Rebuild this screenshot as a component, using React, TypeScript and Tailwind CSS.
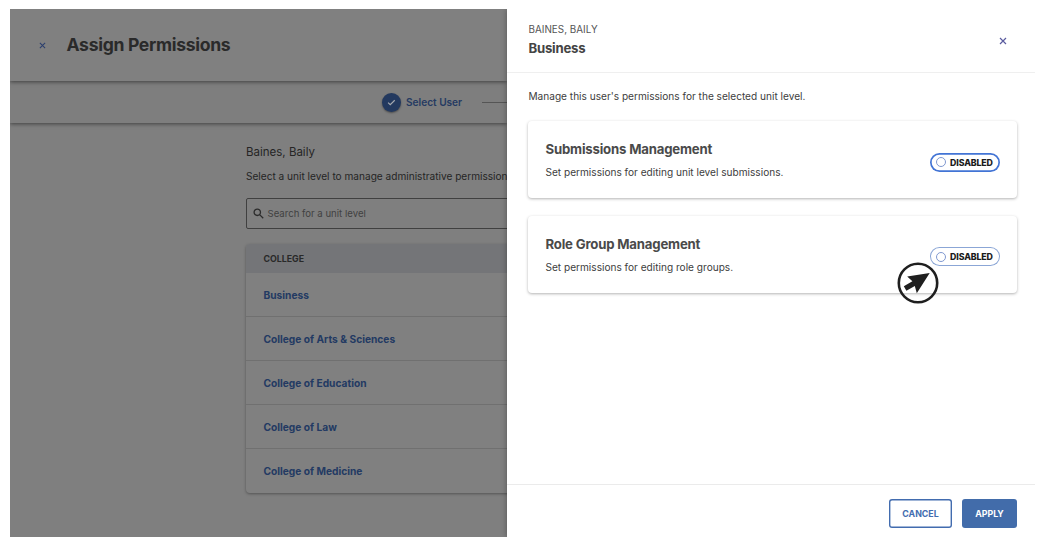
import { useState } from "react";

const colleges = [
    "Business",
    "College of Arts & Sciences",
    "College of Education",
    "College of Law",
    "College of Medicine",
];

const Close = ({ className }: { className: string }) => (
    <svg viewBox="0 0 8 8" className={className} fill="none" stroke="currentColor" strokeWidth="1.2">
        <path d="M1 1l6 6M7 1L1 7" />
    </svg>
);

const PermissionCard = ({ title, text, focused }: { title: string; text: string; focused?: boolean }) => {

    const [enabled, setEnabled] = useState(false);

    return (
        <div className="flex h-[77px] items-center justify-between rounded-[4px] bg-white pl-[17.5px] pr-[17.5px] shadow-[0_1px_3px_rgba(0,0,0,0.3)]">

            <div className="pt-px">
                <h3 className="text-[13.2px] leading-[18px] font-bold tracking-[-0.19px] text-[#4a4a4a]">{title}</h3>
                <p className="mt-[6px] text-[10.11px] leading-[16px] text-[#404040]">{text}</p>
            </div>

            <button
                onClick={() => setEnabled(!enabled)}
                className={
                    "mt-[5px] flex h-[19px] w-[70px] items-center rounded-full bg-white pt-px pl-[6.5px] text-[8.8px] font-extrabold tracking-[-0.12px] text-[#1c1c1c] " +
                    (focused ? "shadow-[inset_0_0_0_1.7px_#4274d5]" : "shadow-[inset_0_0_0_1px_#8ba6d6]")
                }
            >
                <span className="mr-[4px] mb-px size-[10px] shrink-0 rounded-full border border-[#8099d0]" />
                {enabled ? "ENABLED" : "DISABLED"}
            </button>

        </div>
    );
};

const App = () => {
    return (
        <div className="h-[547px] w-[1044px] overflow-hidden bg-white pt-[9px] pl-[10px] font-['Inter',sans-serif]">

            <div className="flex h-[528px] w-[1025px] overflow-hidden">

                <main className="flex w-[497px] shrink-0 flex-col overflow-hidden bg-[#7f7f7f] whitespace-nowrap">

                    <header className="relative z-20 flex h-[72px] shrink-0 items-center bg-[#808080] pl-[29px] shadow-[0_1px_4px_rgba(0,0,0,0.5)]">
                        <Close className="size-[7px] text-[#2b3f6d]" />
                        <h1 className="ml-[20.5px] pt-px text-[17.6px] font-bold tracking-[-0.32px] text-[#2a2a2a]">Assign Permissions</h1>
                    </header>

                    <div className="relative z-10 flex h-[42px] shrink-0 items-center bg-[#7e7e7e] pl-[372px] shadow-[0_1px_4px_rgba(0,0,0,0.5)]">
                        <span className="flex size-[19px] shrink-0 items-center justify-center rounded-full bg-[#23395f] shadow-[0_1px_2px_rgba(0,0,0,0.4)]">
                            <svg viewBox="0 0 10 10" className="size-[9px]" fill="none" stroke="#a5a9b0" strokeWidth="1.3">
                                <path d="M1.2 5.2l2.4 2.3 5-5" />
                            </svg>
                        </span>
                        <span className="ml-[5px] pt-px text-[10.1px] font-semibold text-[#253a62]">Select User</span>
                        <span className="ml-[20px] h-px flex-1 bg-[#555]" />
                    </div>

                    <section className="pt-[20px] pl-[236px]">

                        <h2 className="text-[11.5px] leading-[18px] text-[#252525]">Baines, Baily</h2>
                        <p className="mt-[7px] text-[10.11px] leading-[16px] text-[#252525]">
                            Select a unit level to manage administrative permissions.
                        </p>

                        <div className="mt-[14px] flex h-[31px] w-[500px] items-center rounded-[2px] border border-[#404040] pl-[6px]">
                            <svg viewBox="0 0 10 10" className="size-[11px]" fill="none" stroke="#2c2c2c" strokeWidth="1.2">
                                <circle cx="3.9" cy="3.9" r="2.9" />
                                <path d="M6 6l3.3 3.3" />
                            </svg>
                            <span className="ml-[3.5px] pt-px text-[9.6px] text-[#414141]">Search for a unit level</span>
                        </div>

                        <div className="mt-[15px] w-[500px] overflow-hidden rounded-[4px] bg-[#808080] shadow-[0_1px_3px_rgba(0,0,0,0.35)]">
                            <div className="flex h-[29px] items-center bg-[#747578] pl-[17.5px] text-[8.8px] font-bold text-[#292929]">
                                COLLEGE
                            </div>
                            {colleges.map((name) => (
                                <div
                                    key={name}
                                    className="flex h-[44px] items-center border-b border-[#707070] pt-[2px] pl-[17.5px] text-[10.2px] font-bold text-[#233a63] last:border-b-0 last:pt-px"
                                >
                                    {name}
                                </div>
                            ))}
                        </div>

                    </section>

                </main>

                <aside className="relative z-30 flex flex-1 flex-col bg-white shadow-[0_0_6px_rgba(0,0,0,0.35)]">

                    <header className="flex h-[64px] items-center justify-between border-b border-[#efefef] pr-[28.5px] pl-[21.5px]">
                        <div className="pb-[2px]">
                            <p className="text-[9.9px] leading-[14px] text-[#555]">BAINES, BAILY</p>
                            <h2 className="mt-[3px] text-[13.2px] leading-[18px] font-bold tracking-[-0.24px] text-[#444]">Business</h2>
                        </div>
                        <Close className="size-[8px] text-[#5a5b9f]" />
                    </header>

                    <div className="flex-1 pt-[15px] pr-[18px] pl-[21px]">

                        <p className="pl-[0.5px] text-[10.11px] leading-[16px] text-[#404040]">
                            Manage this user's permissions for the selected unit level.
                        </p>

                        <div className="mt-[17px] flex flex-col gap-[17.5px]">
                            <PermissionCard
                                title="Submissions Management"
                                text="Set permissions for editing unit level submissions."
                                focused
                            />
                            <PermissionCard
                                title="Role Group Management"
                                text="Set permissions for editing role groups."
                            />
                        </div>

                    </div>

                    <footer className="flex h-[53px] items-start justify-end gap-[10px] border-t border-[#ebebeb] pt-[14px] pr-[18px] text-[8.8px] font-bold">
                        <button className="h-[29px] w-[63px] rounded-[3px] pt-px text-[#426caf] shadow-[inset_0_0_0_1.4px_#426caf]">CANCEL</button>
                        <button className="h-[29px] w-[55px] rounded-[3px] bg-[#426caa] pt-px text-white">APPLY</button>
                    </footer>

                    {/* mouse pointer */}
                    <svg viewBox="0 0 42 42" className="absolute top-[253px] left-[389.7px] size-[42px]">
                        <circle cx="21" cy="21" r="19.2" fill="none" stroke="#1f1f1f" strokeWidth="2.6" />
                        <path d="M32.7 11L10.2 14.4l5.2 4.8-8.6 5 2.6 4.6 8.4-4.9 2 7.3z" fill="#1f1f1f" />
                    </svg>

                </aside>

            </div>

        </div>
    );
};

export default App;
